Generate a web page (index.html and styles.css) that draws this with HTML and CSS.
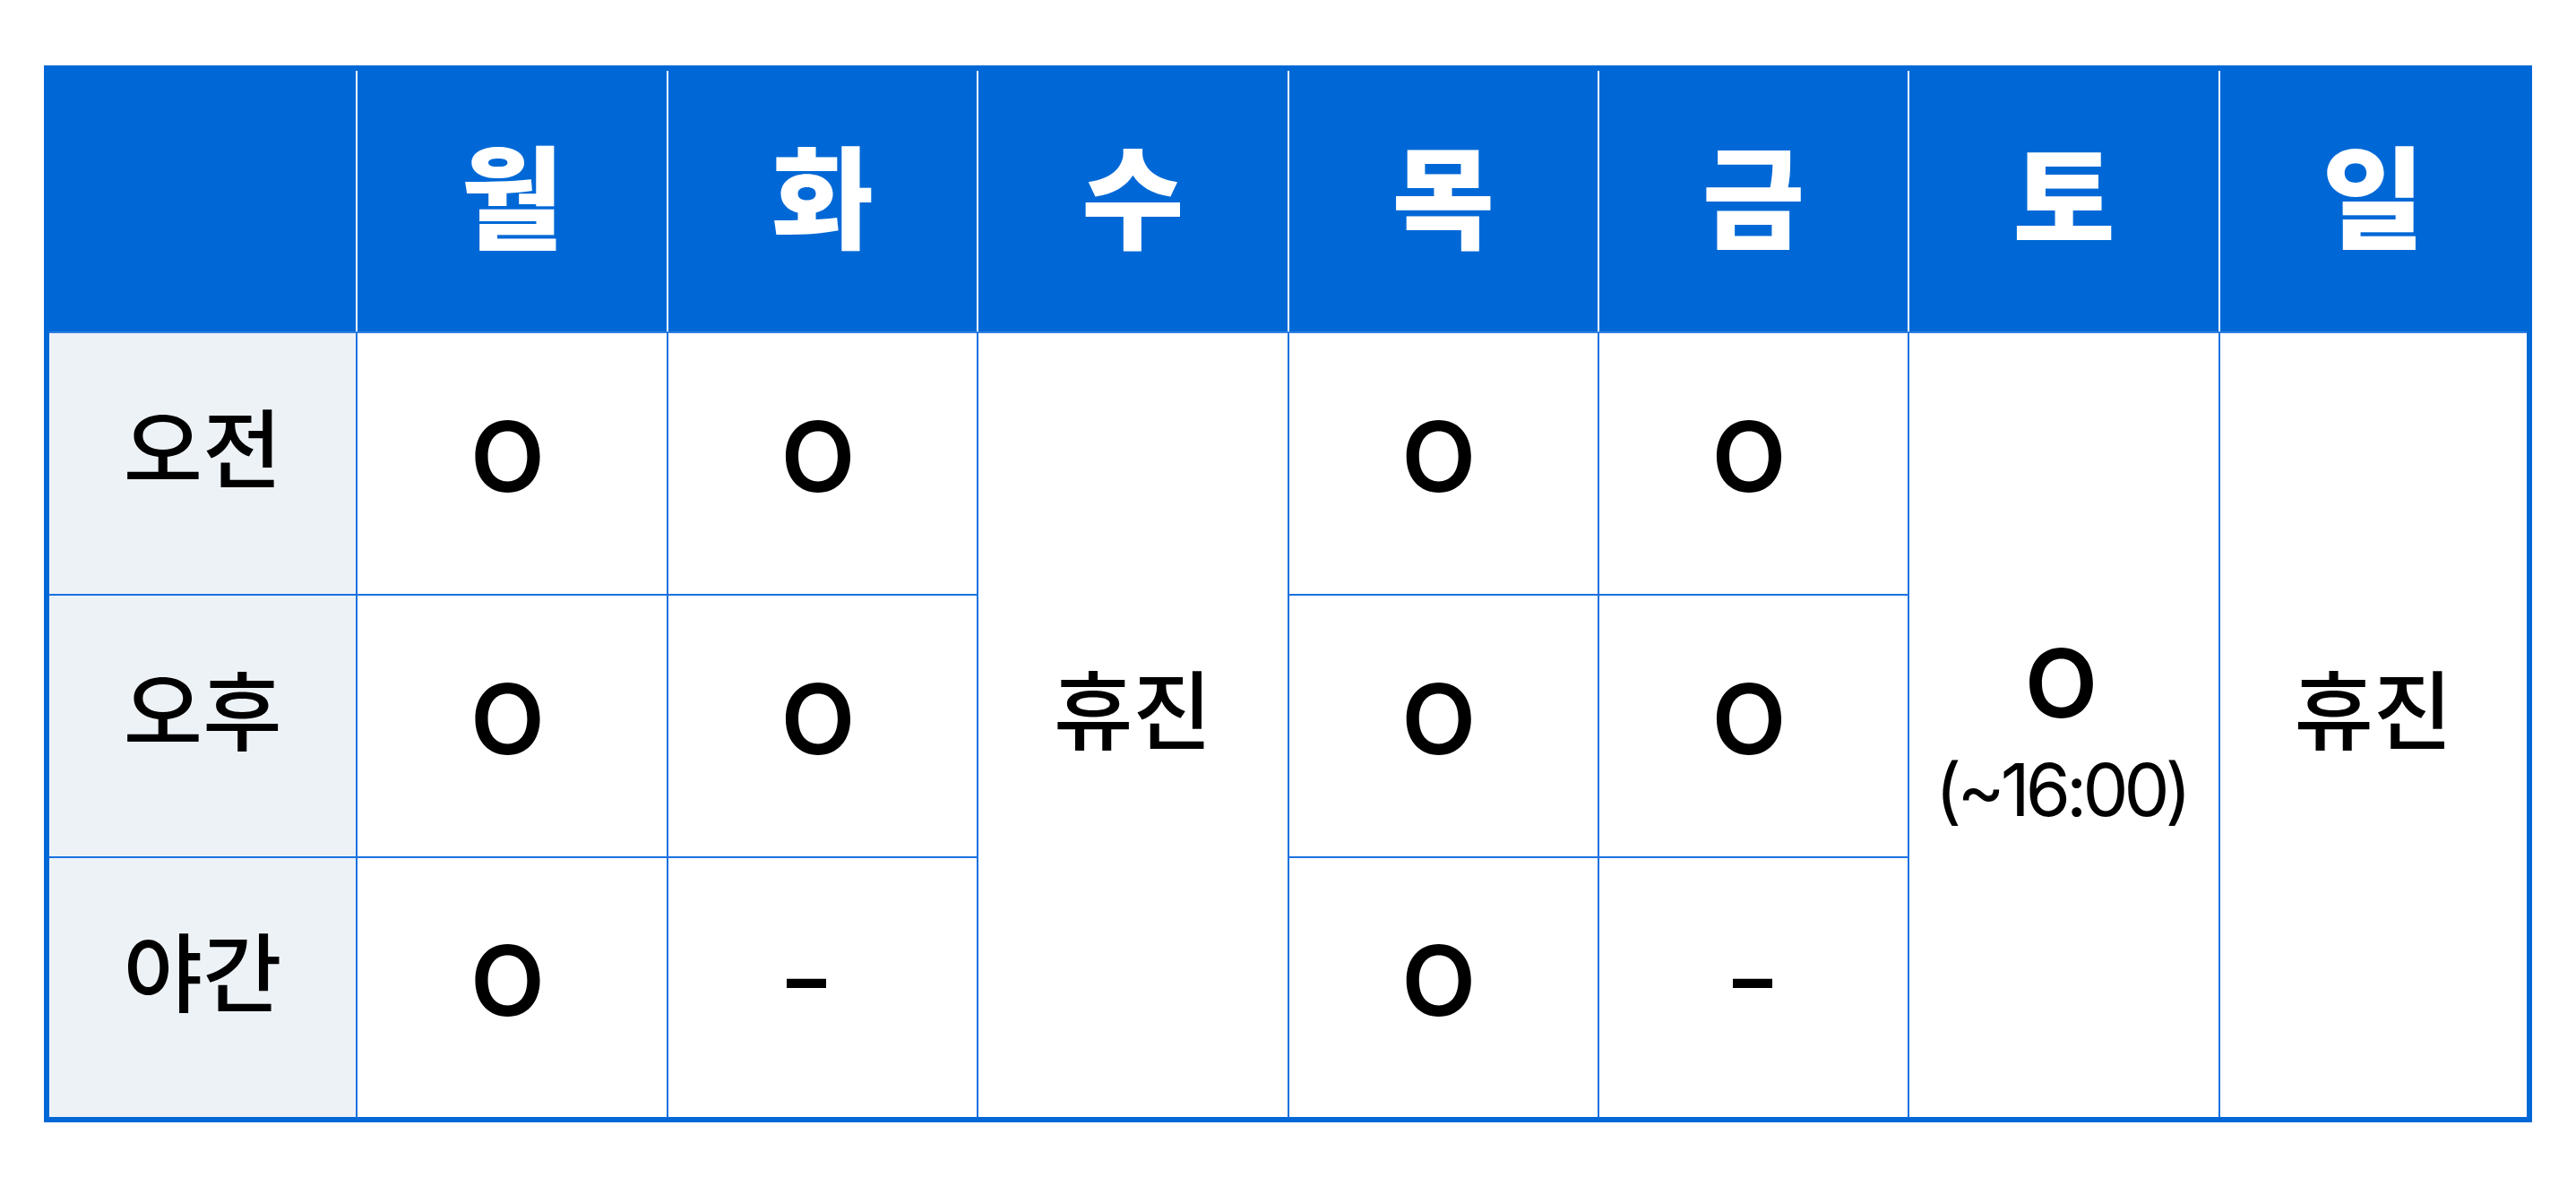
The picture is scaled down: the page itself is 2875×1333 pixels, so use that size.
FILE: index.html
```html
<!DOCTYPE html>
<html lang="ko">
<head>
<meta charset="utf-8">
<title>진료시간</title>
<link rel="stylesheet" href="styles.css">
</head>
<body>
<div class="page">
  <table class="schedule">
    <colgroup>
      <col class="c"><col class="c"><col class="c"><col class="c"><col class="c"><col class="c"><col class="c"><col class="c">
    </colgroup>
    <thead>
      <tr>
        <th class="corner"></th>
        <th>월</th>
        <th>화</th>
        <th>수</th>
        <th>목</th>
        <th>금</th>
        <th>토</th>
        <th>일</th>
      </tr>
    </thead>
    <tbody>
      <tr>
        <th class="label">오전</th>
        <td class="mark">O</td>
        <td class="mark">O</td>
        <td class="off" rowspan="3">휴진</td>
        <td class="mark">O</td>
        <td class="mark">O</td>
        <td class="sat" rowspan="3"><span class="mark-inline">O</span><span class="note">(~16:00)</span></td>
        <td class="off" rowspan="3">휴진</td>
      </tr>
      <tr>
        <th class="label">오후</th>
        <td class="mark">O</td>
        <td class="mark">O</td>
        <td class="mark">O</td>
        <td class="mark">O</td>
      </tr>
      <tr>
        <th class="label">야간</th>
        <td class="mark">O</td>
        <td class="dash dash-left">–</td>
        <td class="mark">O</td>
        <td class="dash">–</td>
      </tr>
    </tbody>
  </table>
</div>
</body>
</html>
```
FILE: styles.css
```css
html, body {
  margin: 0;
  padding: 0;
  background: #ffffff;
}

.page {
  padding: 73px 0 0 49px;
  font-family: "Noto Sans CJK KR", "Noto Sans", sans-serif;
  color: #000;
}

.schedule {
  width: 2777px;
  table-layout: fixed;
  border-collapse: collapse;
  border: 6px solid #0068d6;
}

.schedule thead tr {
  height: 295px;
}

.schedule thead th {
  background: #0068d6;
  color: #ffffff;
  font-size: 124px;
  font-weight: 900;
  line-height: 1;
  text-align: center;
  vertical-align: middle;
  padding: 0 0 22px 0;
  border-top: 6px solid #0068d6;
  border-left: 2px solid #ffffff;
  border-right: 2px solid #ffffff;
  border-bottom: 2px solid #2f7fe0;
}

.schedule thead th:first-child {
  border-left: 6px solid #0068d6;
}

.schedule thead th:last-child {
  border-right: 6px solid #0068d6;
}

.schedule tbody tr {
  height: 293px;
}

.schedule tbody th,
.schedule tbody td {
  border: 2px solid #1a72e0;
  text-align: center;
  vertical-align: middle;
  padding: 0 0 44px 0;
  line-height: 1;
}

.schedule tbody th.label {
  background: #edf2f7;
  font-size: 96px;
  font-weight: 500;
}

.schedule td.off {
  font-size: 96px;
  font-weight: 500;
}

.schedule td.mark {
  font-family: Inter, "Noto Sans", sans-serif;
  font-size: 108px;
  font-weight: 600;
  padding: 0 10px 15px 0;
}

.schedule td.dash {
  font-family: Inter, "Noto Sans", sans-serif;
  font-size: 88px;
  font-weight: 700;
  padding: 0 2px 22px 0;
}

.schedule td.dash-left {
  padding-right: 36px;
}

.schedule td.sat {
  padding: 13px 6px 0 0;
  font-family: Inter, "Noto Sans", sans-serif;
}

.mark-inline {
  display: block;
  font-size: 106px;
  font-weight: 600;
  line-height: 1;
}

.note {
  display: block;
  margin-top: 26px;
  font-size: 81px;
  font-weight: 400;
  line-height: 1;
  letter-spacing: -5px;
}
```
